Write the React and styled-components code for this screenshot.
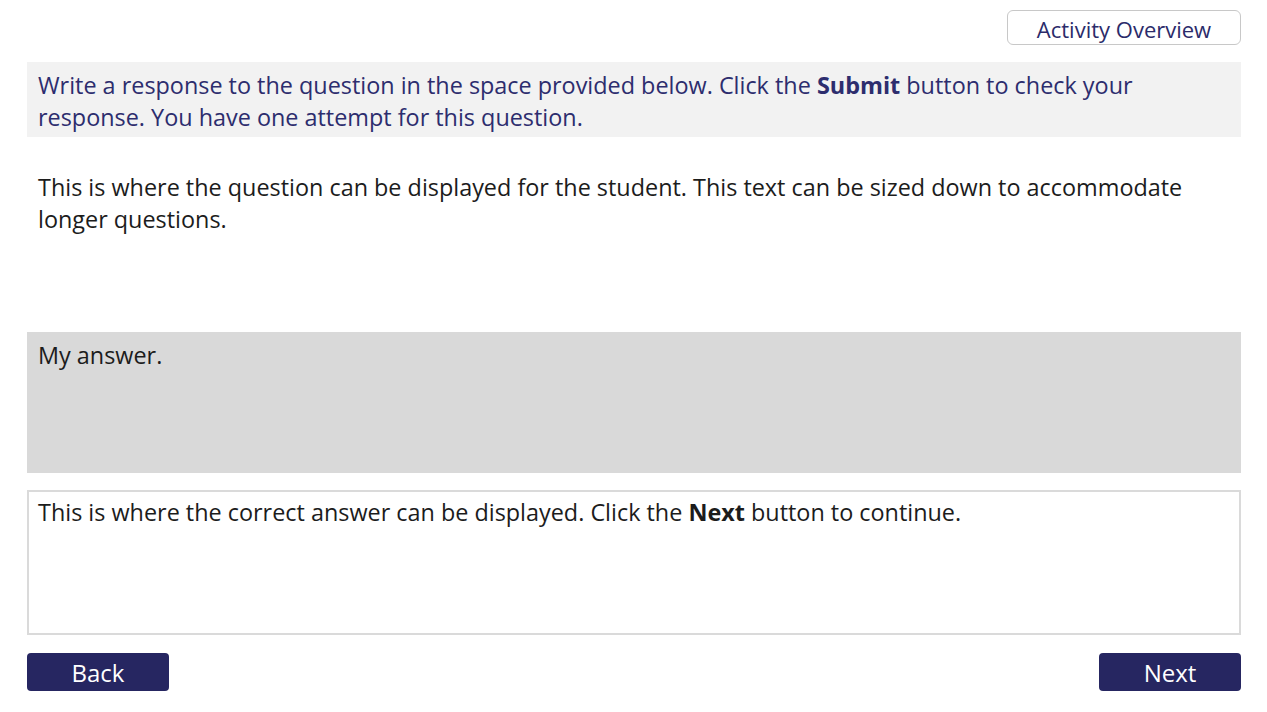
import React from 'react';
import styled, { createGlobalStyle } from 'styled-components';

const Global = createGlobalStyle`
body {
  margin: 0;
  background: #ffffff;
  font-family: "Open Sans", "Noto Sans", sans-serif;
}
`

const Page = styled.div`
display: flex;
flex-direction: column;
width: 1267px;
height: 712px;
padding: 10px 26px 0 27px;
box-sizing: border-box;
`

const TopBar = styled.div`
display: flex;
justify-content: flex-end;
margin-bottom: 17px;
`

const OverviewButton = styled.button`
width: 234px;
height: 35px;
background: #ffffff;
border: 1px solid #c8c8c8;
border-radius: 6px;
color: #2b2b6a;
font-family: inherit;
font-size: 22px;
padding: 2px 0 0;
line-height: 30px;
cursor: pointer;
`

const Instructions = styled.div`
background: #f2f2f2;
color: #2d2d6e;
font-size: 23.4px;
line-height: 32px;
padding: 7px 80px 4px 11px;
height: 75px;
box-sizing: border-box;
`

const Question = styled.div`
color: #1c1c1c;
font-size: 23.4px;
line-height: 32px;
padding: 34px 11px 0;
height: 195px;
box-sizing: border-box;
`

const AnswerBox = styled.div`
background: #d9d9d9;
color: #1c1c1c;
font-size: 23.4px;
line-height: 32px;
padding: 7px 11px;
height: 141px;
box-sizing: border-box;
`

const Feedback = styled.div`
margin-top: 17px;
background: #ffffff;
border: 2px solid #dadada;
color: #1c1c1c;
font-size: 23.4px;
line-height: 32px;
padding: 4px 9px;
height: 145px;
box-sizing: border-box;
`

const NavRow = styled.div`
display: flex;
justify-content: space-between;
margin-top: 18px;
`

const NavButton = styled.button`
width: 142px;
height: 38px;
background: #262661;
border: none;
border-radius: 4px;
color: #ffffff;
font-family: inherit;
font-size: 24px;
line-height: 36px;
padding: 2px 0 0;
cursor: pointer;
`

const App = () => {
  return (
    <>
      <Global />
      <Page>
        <TopBar>
          <OverviewButton>Activity Overview</OverviewButton>
        </TopBar>
        <Instructions>
          Write a response to the question in the space provided below. Click the <b>Submit</b> button to check your response. You have one attempt for this question.
        </Instructions>
        <Question>
          This is where the question can be displayed for the student. This text can be sized down to accommodate longer questions.
        </Question>
        <AnswerBox>My answer.</AnswerBox>
        <Feedback>
          This is where the correct answer can be displayed. Click the <b>Next</b> button to continue.
        </Feedback>
        <NavRow>
          <NavButton>Back</NavButton>
          <NavButton>Next</NavButton>
        </NavRow>
      </Page>
    </>
  )
}

export default App
